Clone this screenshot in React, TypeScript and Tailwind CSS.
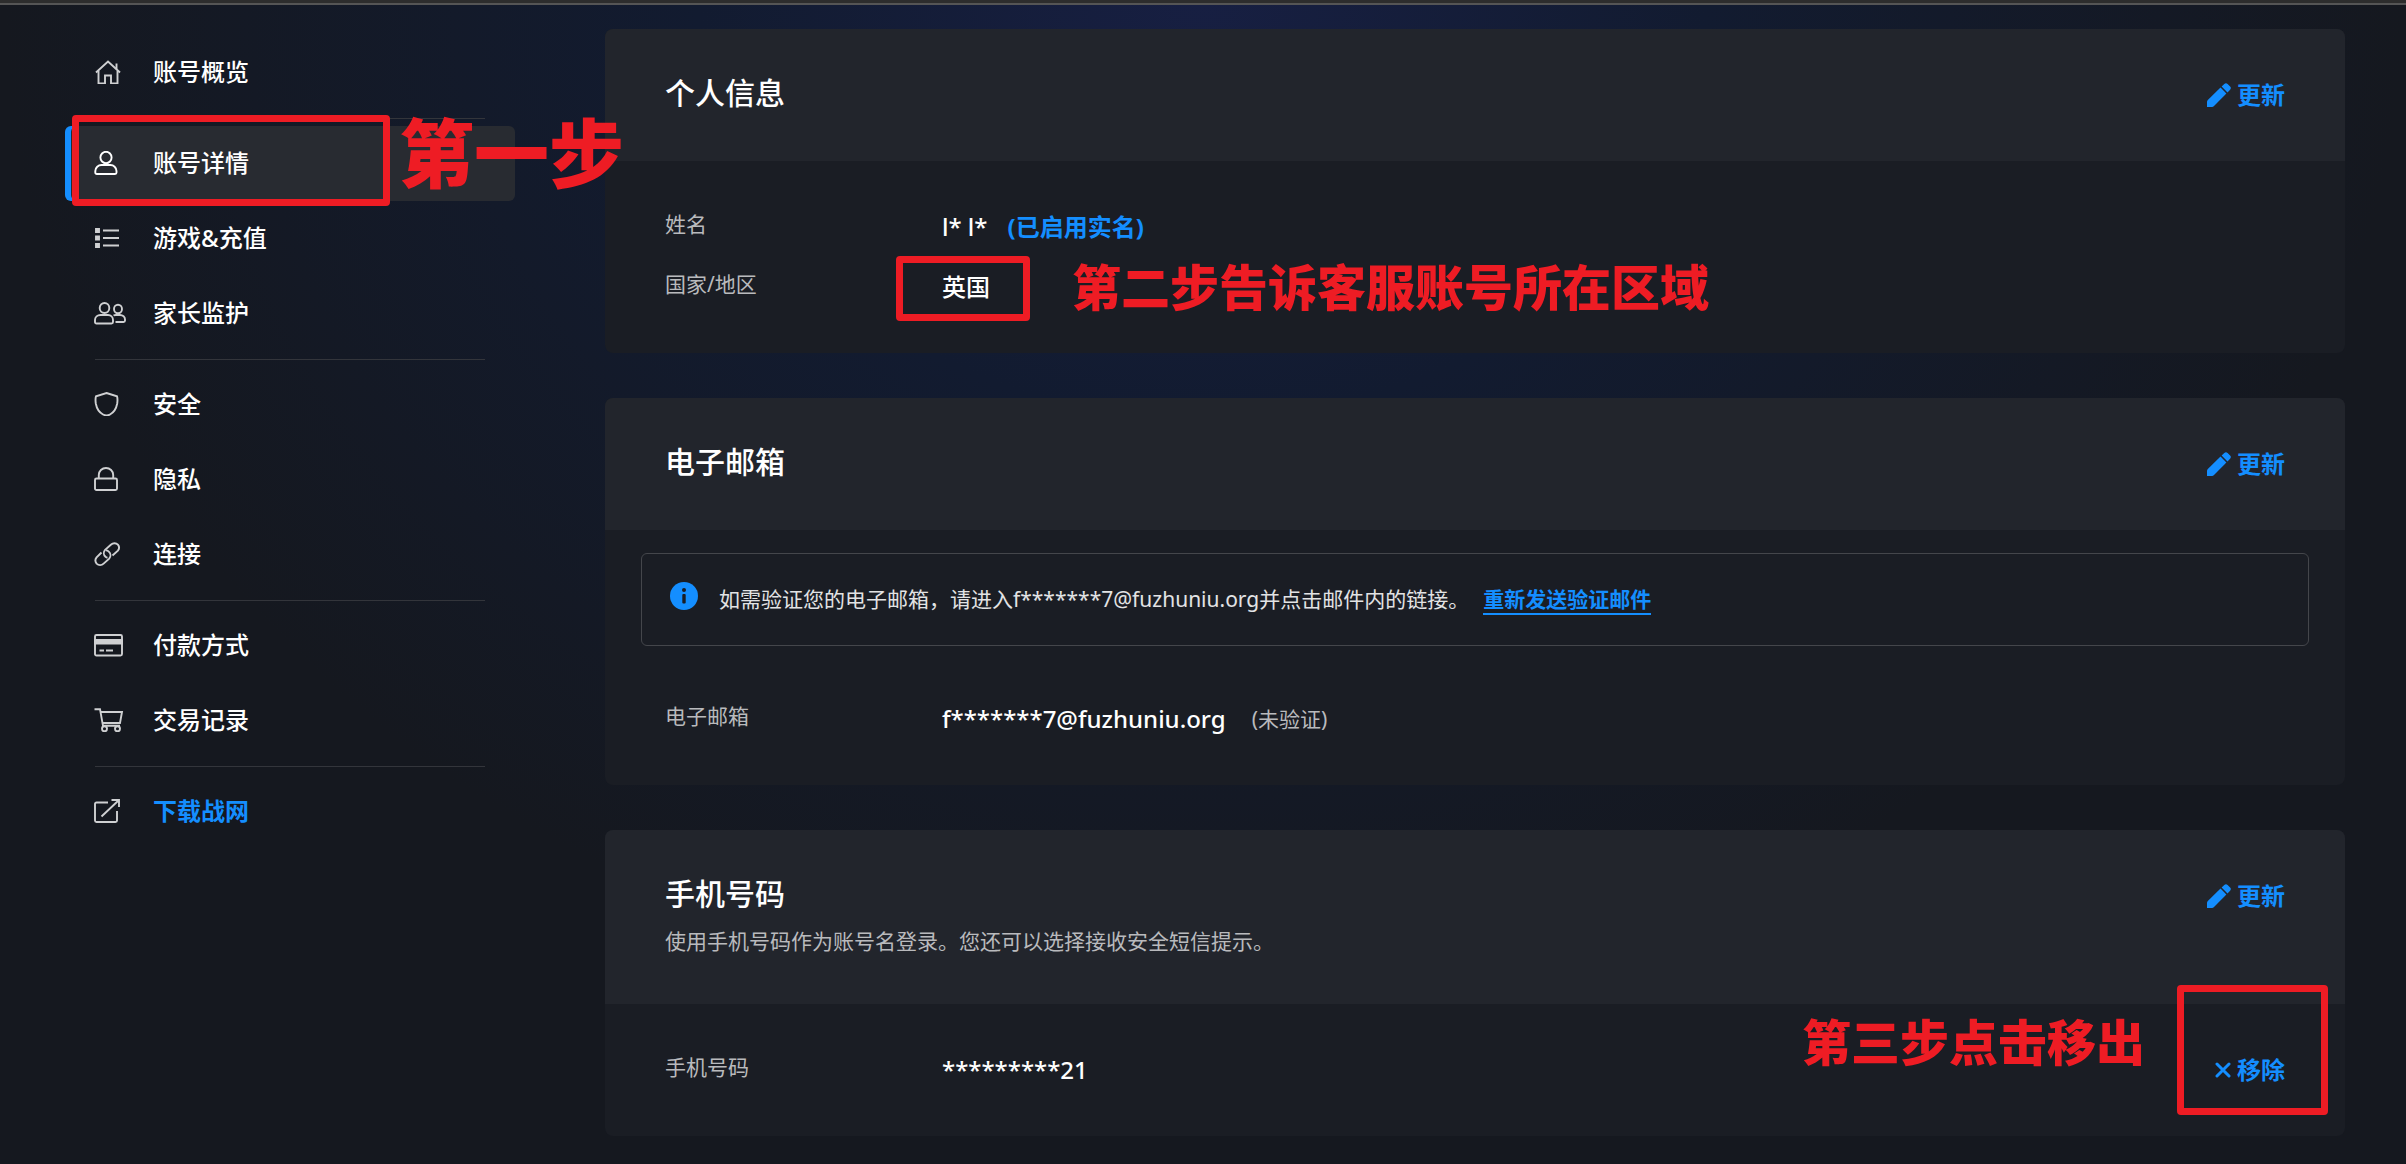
import { Fragment } from 'react'
import type { ReactNode } from 'react'
import clsx from 'clsx'

type IconName = 'home' | 'user' | 'list' | 'users' | 'shield' | 'lock' | 'link' | 'card' | 'cart' | 'external'

interface NavItem {
  icon: IconName
  label: string
  active?: boolean
  external?: boolean
}

const navGroups: NavItem[][] = [
  [{ icon: 'home', label: '账号概览' }],
  [
    { icon: 'user', label: '账号详情', active: true },
    { icon: 'list', label: '游戏&充值' },
    { icon: 'users', label: '家长监护' },
  ],
  [
    { icon: 'shield', label: '安全' },
    { icon: 'lock', label: '隐私' },
    { icon: 'link', label: '连接' },
  ],
  [
    { icon: 'card', label: '付款方式' },
    { icon: 'cart', label: '交易记录' },
  ],
  [{ icon: 'external', label: '下载战网', external: true }],
]

const iconShapes: Record<IconName, ReactNode> = {
  home: (
    <>
      <path d="M2 12.5 14 1.500 26 12.5" />
      <path d="M4.500 11v12.500h6.500v-8h6v8h6.500V11" />
      <path d="M22.500 9V3.500" />
    </>
  ),
  user: (
    <>
      <ellipse cx="12" cy="6.5" rx="5.6" ry="5.7" />
      <path d="M7.5 14h9c3 0 6 2.500 6 6v1.500c0 .9-.6 1.500-1.500 1.500H2.800c-.9 0-1.500-.6-1.500-1.500V20c0-3.500 3-6 6.200-6Z" />
    </>
  ),
  list: (
    <>
      <path d="M9 4.500h16M9 12h16M9 19.500h16" />
      <path d="M2 3h3v3H2zM2 10.500h3v3H2zM2 18h3v3H2z" fill="currentColor" />
    </>
  ),
  users: (
    <>
      <ellipse cx="10.500" cy="7" rx="4.800" ry="5" />
      <path d="M6.500 14h7.500c2.800 0 5 2.200 5 5v2c0 .9-.6 1.500-1.500 1.500H2.500c-.9 0-1.500-.6-1.500-1.500v-2c0-2.800 2.400-5 5.500-5Z" />
      <ellipse cx="24" cy="8" rx="4" ry="4.200" />
      <path d="M19.500 14.500c.8-.4 1.600-.5 2.500-.5h4c2.800 0 5 2 5 4.500v1c0 .9-.6 1.500-1.500 1.500h-8" />
    </>
  ),
  shield: <path d="M12.500 1 23 4.300c.6 2 .6 4.500.2 7.200-.9 5-3.600 9-7.200 11-2.400 1.300-4.600 1.300-7 0-3.600-2-6.300-6-7.200-11-.4-2.700-.4-5.200.2-7.200Z" />,
  lock: (
    <>
      <rect x="1" y="11.500" width="22" height="11.500" rx="1.500" />
      <path d="M4.800 11.500V8a7.200 7 0 0 1 14.400 0v3.500" />
    </>
  ),
  link: (
    <>
      <path d="M7.500 10.500 2.600 15.400a5 5 0 0 0 0 6.200 5 5 0 0 0 7 0l5.600-5a5 5 0 0 0-.4-7c-.8-.7-1.800-1.200-2.800-1.200" />
      <path d="M18.500 13.500 23.900 8.700a4.800 4.800 0 0 0 0-6 4.800 4.800 0 0 0-6.800-.2l-6 5.300a5 5 0 0 0 .4 7c.6.500 1.300.9 2 1" />
    </>
  ),
  card: (
    <>
      <rect x="1" y="2" width="27" height="20.500" rx="1.500" />
      <path d="M1 7h27v3.500H1z" fill="currentColor" />
      <path d="M5.500 17.500h4.500M12 17.500h7" />
    </>
  ),
  cart: (
    <>
      <path d="M.5 1.200H6l3 16.600h17" />
      <path d="M6.500 4h21.500l-2 11H8.500" />
      <circle cx="10.500" cy="20.800" r="2.500" />
      <circle cx="23.500" cy="20.800" r="2.500" />
    </>
  ),
  external: (
    <>
      <path d="M14 3.500H2.500c-.9 0-1.500.6-1.500 1.500v16.500c0 .9.6 1.500 1.500 1.500h19c.9 0 1.500-.6 1.500-1.500V12" />
      <path d="M7.500 17.500 25 1M17.500 1H25v7" />
    </>
  ),
}

function NavIcon({ name }: { name: IconName }) {
  return (
    <svg viewBox="0 0 32 24" className="h-6 w-8" fill="none" stroke="currentColor" strokeWidth="1.900" aria-hidden="true">
      {iconShapes[name]}
    </svg>
  )
}

function PencilIcon() {
  return (
    <svg viewBox="0 0 24 24" className="size-6" fill="currentColor" aria-hidden="true">
      <path d="M13.500 4.600 19.400 10.500 7 23c-.6.600-1.200.9-2 .9H0V19c0-.8.200-1.400.8-2Z" />
      <path d="M14.600 3.500 17.300.9c1-1 2.300-1 3.300 0l2.500 2.500c1 1 1 2.300 0 3.300l-2.600 2.700Z" />
    </svg>
  )
}

function CrossIcon() {
  return (
    <svg viewBox="0 0 16 16" className="size-4" fill="none" stroke="currentColor" strokeWidth="3" strokeLinecap="round" aria-hidden="true">
      <path d="M2 2 14 14M14 2 2 14" />
    </svg>
  )
}

function InfoIcon() {
  return (
    <svg viewBox="0 0 28 28" className="mb-2 size-7 shrink-0" aria-hidden="true">
      <circle cx="14" cy="14" r="14" className="fill-[#148eff]" />
      <circle cx="14" cy="8" r="2" className="fill-[#1a1d24]" />
      <rect x="12.300" y="12" width="3.400" height="9.500" rx="1" className="fill-[#1a1d24]" />
    </svg>
  )
}

// Red frame laid over whichever element the step points at
function Frame({ className }: { className: string }) {
  return <span className={clsx('pointer-events-none absolute z-10 rounded border-[7px] border-[#ee1c24]', className)} />
}

function Note({ className, children }: { className: string; children: ReactNode }) {
  return (
    <span className={clsx('pointer-events-none absolute z-10 leading-none font-black whitespace-nowrap text-[#ee1c24]', className)}>
      {children}
    </span>
  )
}

function Sidebar() {
  return (
    <nav className="w-[450px] shrink-0 pt-[30px]">
      {navGroups.map((group, index) => (
        <Fragment key={group[0].label}>
          {index > 0 && <hr className="mx-[30px] mt-2 mb-[7px] border-[#33353b]" />}
          <ul>
            {group.map((item) => (
              <li key={item.label} className="relative">
                <a
                  href="#"
                  className={clsx(
                    'flex h-[75px] items-center gap-[27px] pb-0.5 pl-[29px] text-2xl',
                    item.active && 'rounded-md bg-[#282b31] shadow-[inset_6px_0_0_#148eff]',
                  )}
                >
                  <span className={item.active ? 'text-white' : 'text-[#cfd0d2]'}>
                    <NavIcon name={item.icon} />
                  </span>
                  <span className={item.external ? 'font-bold text-[#148eff]' : 'font-medium text-white'}>{item.label}</span>
                </a>
                {item.active && (
                  <>
                    <Frame className="-top-[11px] left-[7px] h-[91px] w-[318px]" />
                    <Note className="-top-[10px] left-[334px] text-[75px]">第一步</Note>
                  </>
                )}
              </li>
            ))}
          </ul>
        </Fragment>
      ))}
    </nav>
  )
}

function UpdateButton() {
  return (
    <button type="button" className="flex items-center gap-1.5 text-2xl font-bold text-[#148eff]">
      <PencilIcon />
      更新
    </button>
  )
}

function Card({ title, hint, children }: { title: string; hint?: string; children: ReactNode }) {
  return (
    <section className="rounded-lg bg-[#1a1d24]">
      <header className="flex items-start justify-between rounded-t-lg bg-[#22252c] px-[60px] pt-[42px] pb-[46px]">
        <div>
          <h2 className="text-3xl leading-[44px] font-medium text-white">{title}</h2>
          {hint && <p className="mt-2.5 mb-0.5 text-[21px] leading-[30px] text-[#b9babd]">{hint}</p>}
        </div>
        <div className="pt-2">
          <UpdateButton />
        </div>
      </header>
      {children}
    </section>
  )
}

function Row({ label, children }: { label: string; children: ReactNode }) {
  return (
    <div className="flex h-[60px] items-center">
      <dt className="w-[277px] shrink-0 pb-1 text-[21px] text-[#b9babd]">{label}</dt>
      <dd className="flex flex-1 items-center text-2xl font-medium text-white">{children}</dd>
    </div>
  )
}

export default function App() {
  return (
    <div className="min-h-screen bg-[#15181f] bg-[radial-gradient(ellipse_1200px_1000px_at_50%_0,#171f42_0%,#121b30_42%,#15181f_100%)] font-['Noto_Sans','Noto_Sans_CJK_SC',sans-serif]">
      <div className="h-[5px] border-b-2 border-[#555555] bg-[#2d2d2d]" />
      <div className="flex gap-[90px] pr-[61px] pl-[65px]">
        <Sidebar />
        <main className="flex flex-1 flex-col gap-[45px] pt-6 pb-7">
          <Card title="个人信息">
            <dl className="px-[60px] py-9">
              <Row label="姓名">
                l* l*
                <a href="#" className="ml-5 font-bold text-[#148eff]">(已启用实名)</a>
              </Row>
              <Row label="国家/地区">
                <span className="relative">
                  英国
                  <Frame className="-top-[15px] -right-[40px] -bottom-[18px] -left-[46px]" />
                  <Note className="-top-2 left-[130px] text-[49px]">第二步告诉客服账号所在区域</Note>
                </span>
              </Row>
            </dl>
          </Card>

          <Card title="电子邮箱">
            <div className="mx-9 mt-[23px] mb-[7px] flex h-[93px] items-center gap-[21px] rounded-md border border-[#44464b] px-7">
              <InfoIcon />
              <p className="text-[21px] text-[#e2e3e4]">
                如需验证您的电子邮箱，请进入f*******7@fuzhuniu.org并点击邮件内的链接。
                <a href="#" className="ml-3.5 border-b-2 border-[#148eff] font-bold text-[#148eff]">重新发送验证邮件</a>
              </p>
            </div>
            <dl className="px-[60px] py-9">
              <Row label="电子邮箱">
                f*******7@fuzhuniu.org
                <span className="ml-[26px] text-[21px] font-normal text-[#b9babd]">(未验证)</span>
              </Row>
            </dl>
          </Card>

          <Card title="手机号码" hint="使用手机号码作为账号名登录。您还可以选择接收安全短信提示。">
            <dl className="px-[60px] py-9">
              <Row label="手机号码">
                *********21
                <span className="relative ml-auto">
                  <button type="button" className="flex items-center gap-1.5 font-bold text-[#148eff]">
                    <CrossIcon />
                    移除
                  </button>
                  <Frame className="-top-[69px] -right-[43px] h-[130px] w-[151px]" />
                  <Note className="-top-9 right-[140px] text-[49px]">第三步点击移出</Note>
                </span>
              </Row>
            </dl>
          </Card>
        </main>
      </div>
    </div>
  )
}
